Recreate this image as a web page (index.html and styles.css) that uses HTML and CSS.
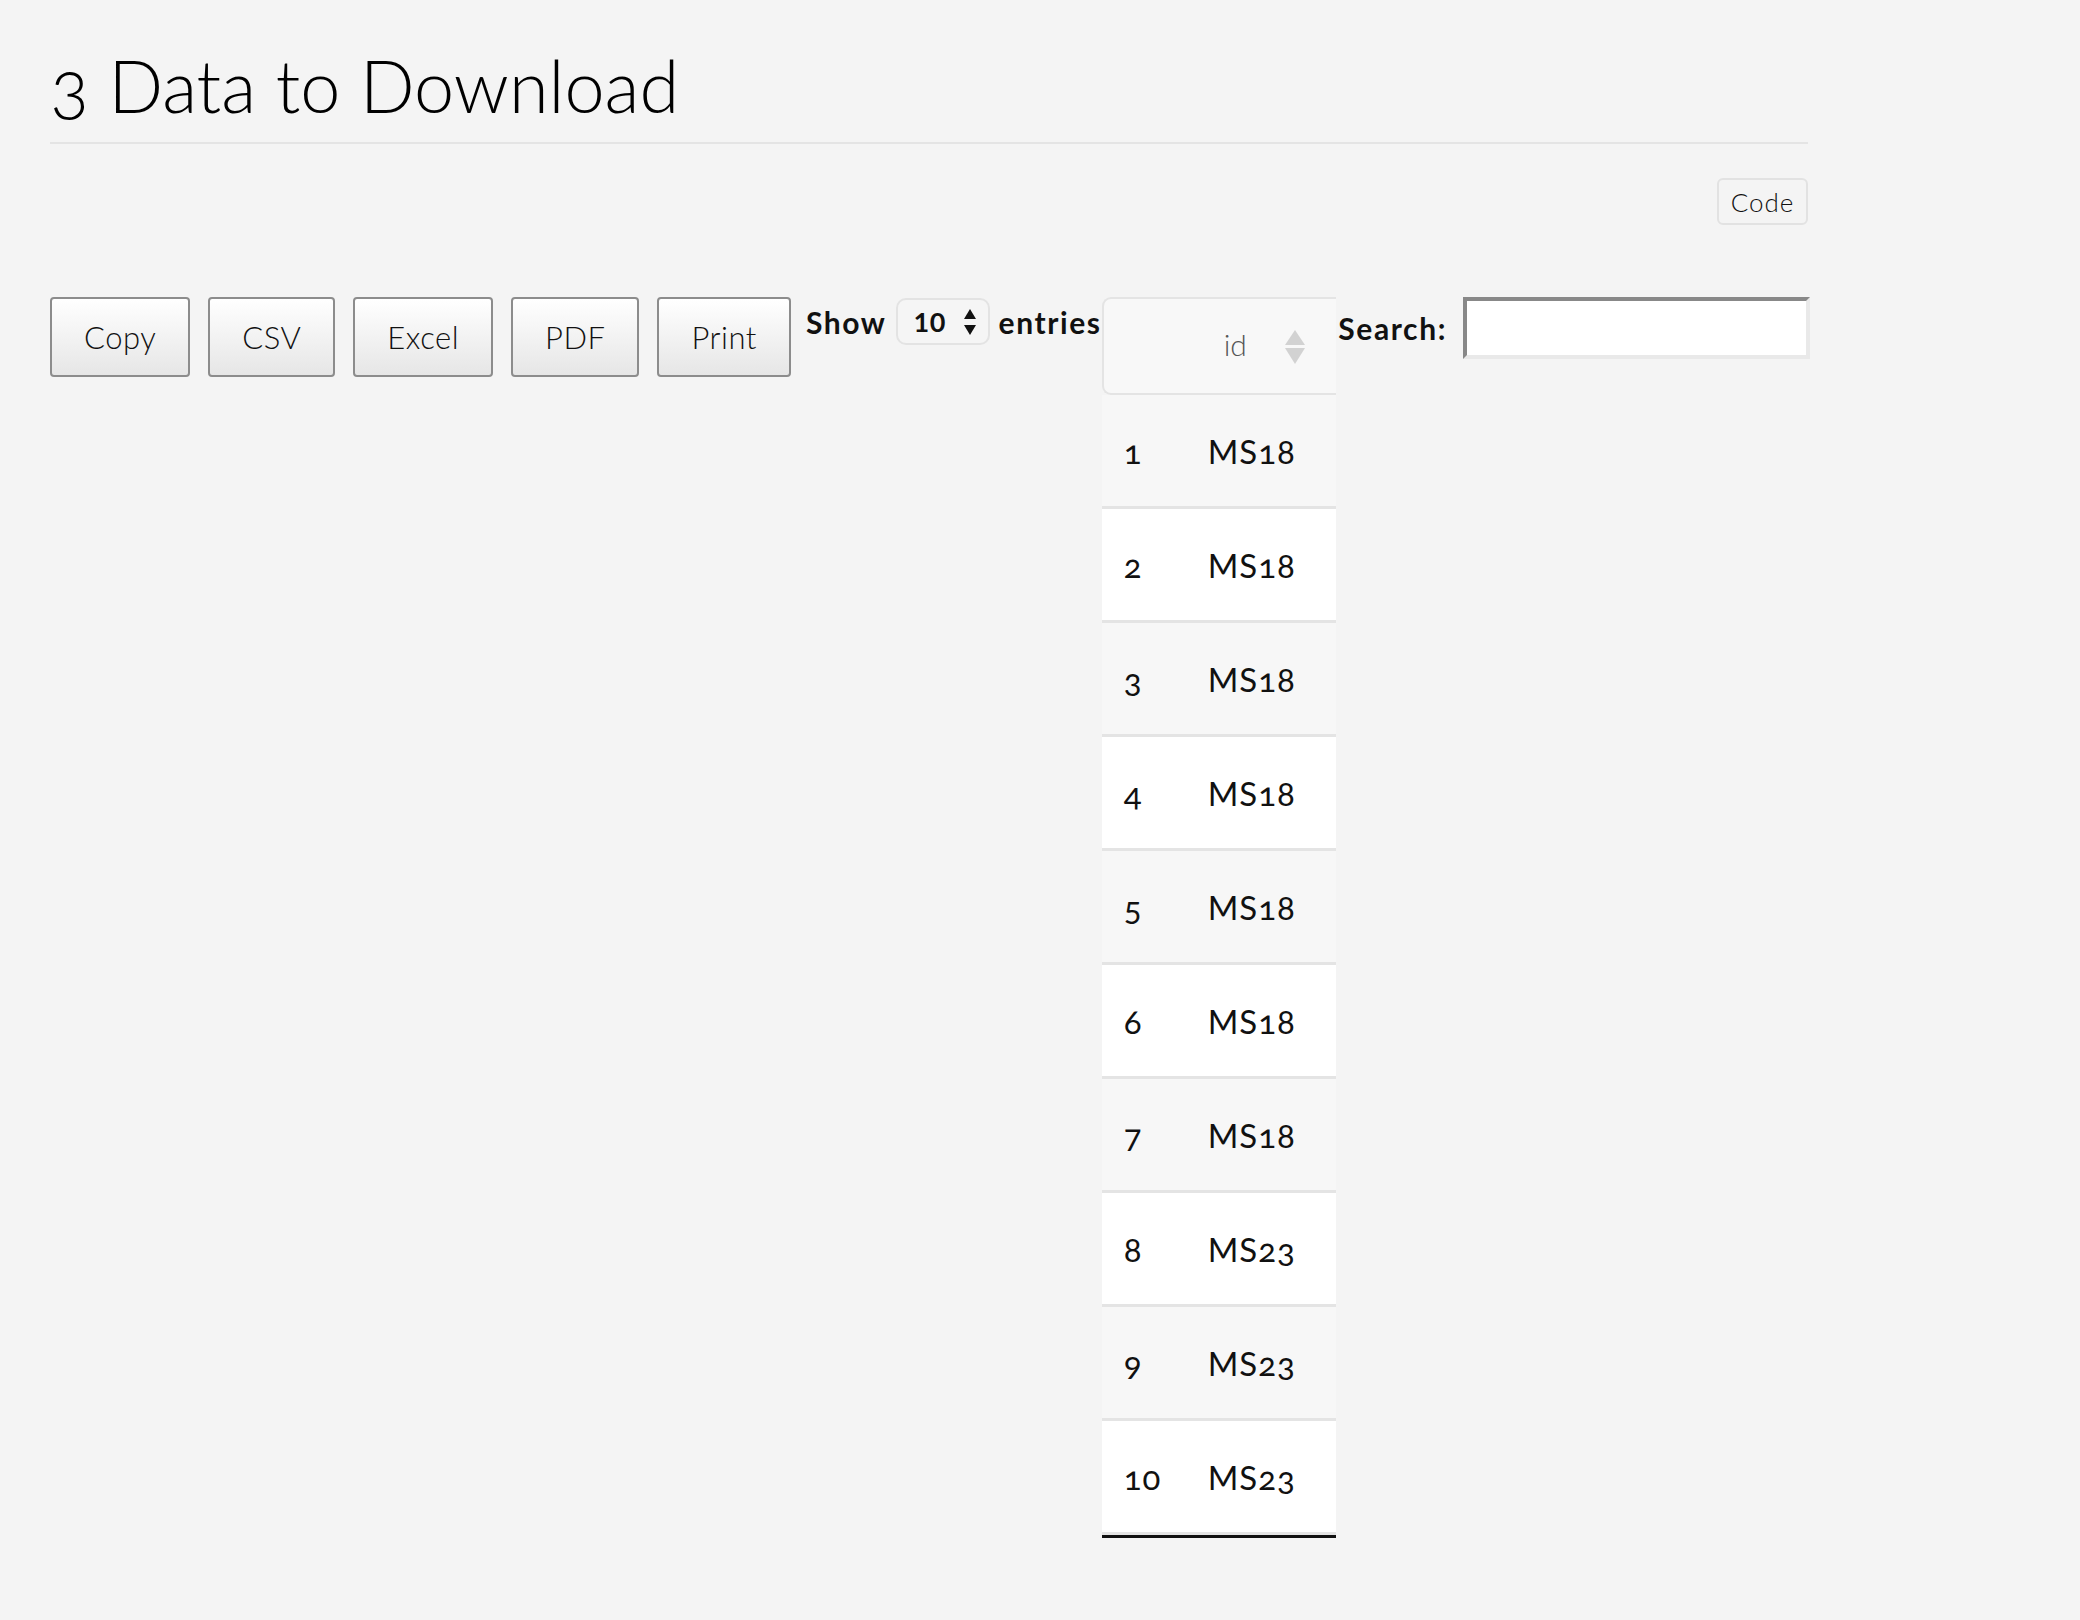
FILE: index.html
```html
<!DOCTYPE html>
<html lang="en">
<head>
    <meta charset="UTF-8">
    <title>3 Data to Download</title>
    <link rel="stylesheet" href="styles.css">
</head>
<body>
    <div class="main-container">
        <h1 class="section-title">3 Data to Download</h1>

        <div class="code-row">
            <button class="code-btn">Code</button>
        </div>

        <div class="dt-wrapper">
            <div class="dt-buttons">
                <button class="dt-button">Copy</button>
                <button class="dt-button">CSV</button>
                <button class="dt-button">Excel</button>
                <button class="dt-button">PDF</button>
                <button class="dt-button">Print</button>
            </div>

            <div class="dt-length">
                <span>Show</span>
                <span class="length-select">
                    <span>10</span>
                    <svg width="16" height="30" viewBox="0 0 16 30">
                        <path d="M8 2 L14 12 L2 12 Z" fill="#111"/>
                        <path d="M2 18 L14 18 L8 28 Z" fill="#111"/>
                    </svg>
                </span>
                <span>entries</span>
            </div>

            <div class="dt-scroll">
                <table class="data-table">
                    <thead>
                        <tr>
                            <th class="col-num"></th>
                            <th class="col-id">
                                <span>id</span>
                                <svg class="sort-icon" width="20" height="34" viewBox="0 0 20 34">
                                    <path d="M10 0 L20 15 L0 15 Z" fill="#d2d2d2"/>
                                    <path d="M0 18 L20 18 L10 34 Z" fill="#d2d2d2"/>
                                </svg>
                            </th>
                        </tr>
                    </thead>
                    <tbody>
                        <tr><td>1</td><td>MS18</td></tr>
                        <tr><td>2</td><td>MS18</td></tr>
                        <tr><td>3</td><td>MS18</td></tr>
                        <tr><td>4</td><td>MS18</td></tr>
                        <tr><td>5</td><td>MS18</td></tr>
                        <tr><td>6</td><td>MS18</td></tr>
                        <tr><td>7</td><td>MS18</td></tr>
                        <tr><td>8</td><td>MS23</td></tr>
                        <tr><td>9</td><td>MS23</td></tr>
                        <tr><td>10</td><td>MS23</td></tr>
                    </tbody>
                </table>
            </div>

            <div class="dt-filter">
                <label for="search">Search:</label>
                <input type="search" id="search" class="search-input">
            </div>
        </div>
    </div>
</body>
</html>
```

FILE: styles.css
```css
* {
    box-sizing: border-box;
}

body {
    margin: 0;
    background-color: #f4f4f4;
    color: #111;
    font-family: Lato, 'Open Sans', sans-serif;
    font-variant-numeric: oldstyle-nums;
}

.main-container {
    width: 1808px;
    padding-left: 50px;
}

.section-title {
    margin: 46px 0 0 0;
    padding-bottom: 17px;
    border-bottom: 2px solid #e4e4e4;
    font-size: 72px;
    font-weight: 300;
    line-height: 79px;
    color: #000;
}

.code-row {
    display: flex;
    justify-content: flex-end;
    margin-top: 34px;
}

.code-btn {
    width: 91px;
    height: 47px;
    padding: 0;
    background-color: #f4f4f4;
    border: 2px solid #e2e2e2;
    border-radius: 6px;
    font-family: inherit;
    font-size: 26px;
    font-weight: 300;
    letter-spacing: 1px;
    color: #111;
}

.dt-wrapper {
    display: flex;
    align-items: flex-start;
    margin-top: 72px;
}

.dt-wrapper > div {
    flex-shrink: 0;
}

.dt-buttons {
    display: flex;
    gap: 18px;
}

.dt-button {
    height: 80px;
    padding: 0 32px;
    background: linear-gradient(to bottom, #ffffff 0%, #e6e6e6 100%);
    border: 2px solid #8c8c8c;
    border-radius: 4px;
    font-family: inherit;
    font-size: 31px;
    font-weight: 300;
    letter-spacing: 0.5px;
    color: #111;
}

.dt-length {
    display: flex;
    align-items: center;
    gap: 9px;
    height: 47px;
    margin-left: 15px;
    margin-top: 1px;
    font-size: 30px;
    font-weight: 700;
    letter-spacing: 1.6px;
}

.length-select {
    display: flex;
    flex-shrink: 0;
    align-items: center;
    justify-content: space-between;
    width: 94px;
    height: 47px;
    padding: 0 10px 0 16px;
    background-color: #f5f5f5;
    border: 2px solid #e3e3e3;
    border-radius: 10px;
    font-size: 27px;
    letter-spacing: 0.5px;
    font-variant-numeric: lining-nums;
}

.dt-scroll {
    width: 234px;
    overflow: hidden;
}

.data-table {
    width: 300px;
    border-collapse: separate;
    border-spacing: 0;
    border-bottom: 3px solid #111;
    font-size: 33px;
    font-weight: 400;
    letter-spacing: 1px;
}

.data-table th {
    height: 98px;
    padding: 0;
    background-color: #f8f8f8;
    border-top: 2px solid #e4e4e4;
    border-bottom: 2px solid #e4e4e4;
    font-size: 30px;
    font-weight: 300;
    letter-spacing: 0;
    color: #555;
}

.data-table th.col-num {
    width: 88px;
    border-left: 2px solid #e4e4e4;
    border-radius: 9px 0 0 9px;
}

.data-table th.col-id {
    text-align: left;
}

.data-table th.col-id span {
    display: inline-block;
    margin-left: 34px;
    margin-bottom: 6px;
    vertical-align: middle;
}

.sort-icon {
    margin-left: 30px;
    vertical-align: middle;
}

.data-table td {
    height: 114px;
    padding: 0 0 0 22px;
    border-bottom: 3px solid #e4e4e4;
    background-color: #f7f7f7;
}

.data-table td + td {
    padding-left: 18px;
}

.data-table tbody tr:nth-child(even) td {
    background-color: #ffffff;
}

.dt-filter {
    display: flex;
    align-items: center;
    gap: 16px;
    height: 62px;
    margin-left: auto;
    margin-right: -2px;
    font-size: 30px;
    font-weight: 700;
    letter-spacing: 1.6px;
}

.search-input {
    width: 347px;
    height: 62px;
    background-color: #fff;
    border-style: solid;
    border-width: 4px;
    border-color: #888 #e9e9e9 #e9e9e9 #888;
    outline: none;
}
```
